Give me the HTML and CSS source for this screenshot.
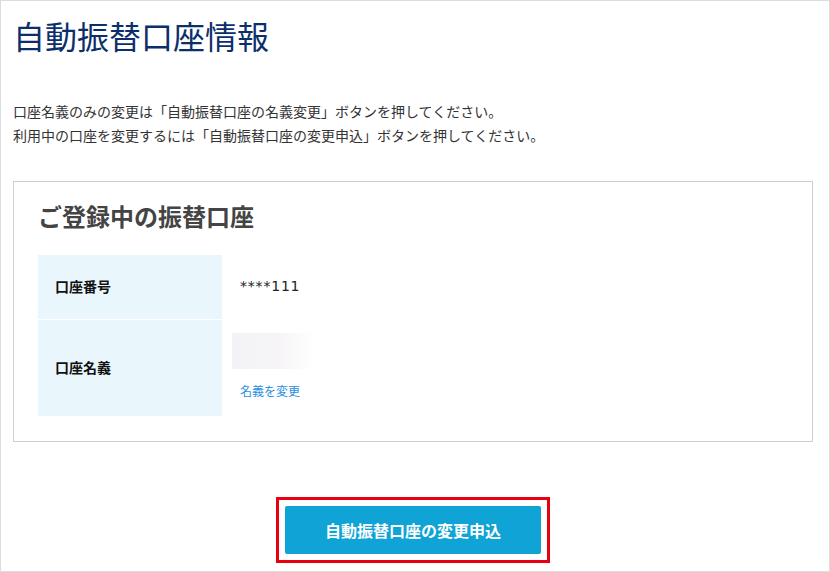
FILE: index.html
```html
<!DOCTYPE html>
<html lang="ja">
<head>
<meta charset="utf-8">
<title>自動振替口座情報</title>
<link rel="stylesheet" href="styles.css">
</head>
<body>
<div class="page">
  <h1 class="title">自動振替口座情報</h1>
  <p class="intro">口座名義のみの変更は「自動振替口座の名義変更」ボタンを押してください。<br>利用中の口座を変更するには「自動振替口座の変更申込」ボタンを押してください。</p>
  <section class="card">
    <h2 class="card-title">ご登録中の振替口座</h2>
    <div class="info">
      <div class="label row1">口座番号</div>
      <div class="value row1"><span class="number">****111</span></div>
      <div class="label row2">口座名義</div>
      <div class="value row2">
        <div class="blurred"></div>
        <a class="link" href="#">名義を変更</a>
      </div>
    </div>
  </section>
  <div class="actions">
    <div class="highlight">
      <button class="btn" type="button">自動振替口座の変更申込</button>
    </div>
  </div>
</div>
</body>
</html>
```
FILE: styles.css
```css
html, body {
  margin: 0;
  padding: 0;
  background: #fff;
}
body {
  font-family: "Noto Sans CJK JP", "Noto Sans", sans-serif;
  color: #333;
}
.page {
  box-sizing: border-box;
  width: 830px;
  height: 572px;
  border: 1px solid #dcdcdc;
  padding: 10px 16px 0 12px;
  overflow: hidden;
}
.title {
  margin: 0;
  font-size: 32px;
  line-height: 48px;
  font-weight: normal;
  color: #0c2f6b;
}
.intro {
  margin: 40px 0 0 0;
  font-size: 14px;
  line-height: 24px;
  color: #333;
}
.card {
  margin-top: 34px;
  border: 1px solid #cfcfcf;
  padding: 16px 24px 25px 24px;
}
.card-title {
  margin: 0 0 21px 0;
  font-size: 24px;
  line-height: 36px;
  font-weight: bold;
  color: #444;
}
.info {
  display: grid;
  grid-template-columns: 184px 1fr;
  row-gap: 1px;
}
.label {
  background: #e9f6fc;
  font-size: 14px;
  font-weight: bold;
  color: #111;
  display: flex;
  align-items: center;
  padding-left: 17px;
  padding-bottom: 2px;
  box-sizing: border-box;
}
.row1 { height: 64px; }
.row2 { height: 96px; }
.value {
  padding-left: 18px;
  font-size: 14px;
  color: #222;
}
.value.row1 {
  display: flex;
  align-items: center;
  padding-bottom: 2px;
  box-sizing: border-box;
}
.number {
  font-family: "DejaVu Sans", sans-serif;
  font-size: 14px;
  letter-spacing: 0.8px;
}
.value.row2 {
  display: flex;
  flex-direction: column;
  align-items: flex-start;
  padding-top: 13px;
  box-sizing: border-box;
}
.blurred {
  width: 82px;
  height: 36px;
  margin-left: -8px;
  background: linear-gradient(90deg, #f3f3f7 0%, #f6f4f6 55%, rgba(255,255,255,0) 100%);
}
.link {
  margin-top: 13px;
  font-size: 12px;
  line-height: 18px;
  color: #2a8fe0;
  text-decoration: none;
}
.actions {
  display: flex;
  justify-content: center;
  margin-top: 55px;
  width: 800px;
}
.highlight {
  border: 3px solid #e60012;
  padding: 6px;
}
.btn {
  display: block;
  width: 256px;
  height: 48px;
  border: none;
  border-radius: 2px;
  background: #10a3d5;
  color: #fff;
  font-family: "Noto Sans CJK JP", "Noto Sans", sans-serif;
  font-size: 16px;
  font-weight: bold;
  cursor: pointer;
}
```
